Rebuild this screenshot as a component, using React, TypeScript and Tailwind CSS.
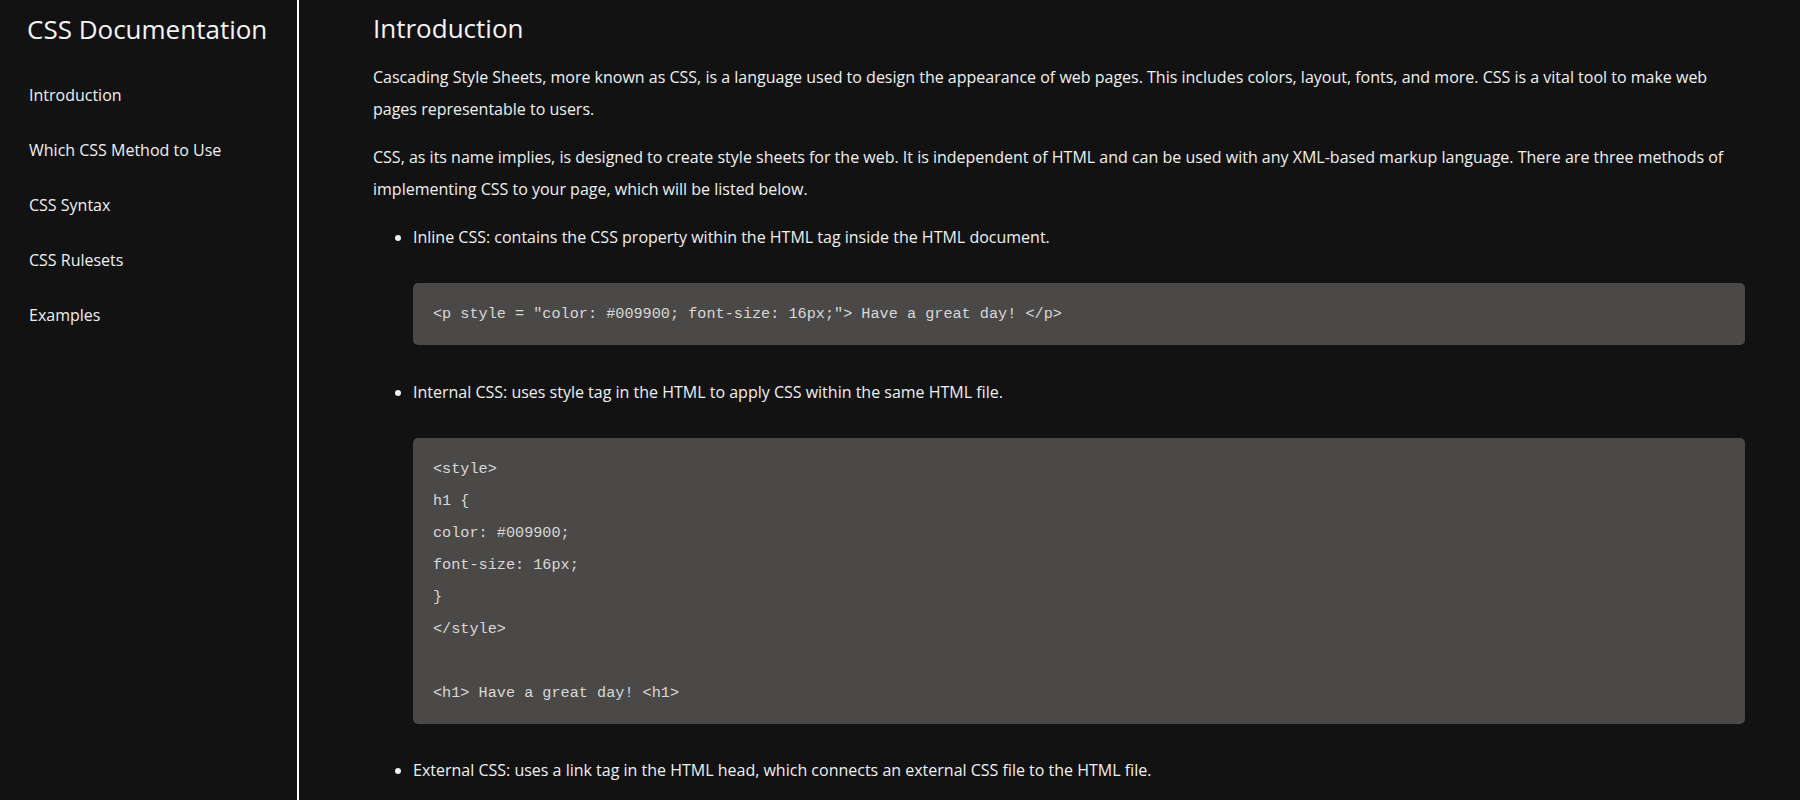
const NAV = ["Introduction", "Which CSS Method to Use", "CSS Syntax", "CSS Rulesets", "Examples"];

const INTERNAL_CODE = `<style>
h1 {
color: #009900;
font-size: 16px;
}
</style>

<h1> Have a great day! <h1>`;

function CodeBlock({ code }: { code: string }) {
  return (
    <pre className="mt-[30px] mb-[30.5px] whitespace-pre rounded-[5px] bg-[#4a4948] px-5 py-[15px] font-['Liberation_Mono',monospace] text-[15.2px] leading-8 text-[#d8d8d8]">
      {code}
    </pre>
  );
}

export default function App() {
  return (
    <div className="flex min-h-screen bg-[#121212] font-['Open_Sans',sans-serif] text-[#f0f0f0]">
      <nav className="h-screen w-[299px] shrink-0 border-r-2 border-white">
        <h1 className="pl-[27px] pt-[12px] text-[26px] leading-[35px] text-[#f4f4f4]">CSS Documentation</h1>
        <ul className="mt-[20px]">
          {NAV.map((item) => (
            <li key={item} className="flex h-[55px] items-center pl-[29px] text-base">
              <a href="#">{item}</a>
            </li>
          ))}
        </ul>
      </nav>

      <main className="min-w-0 flex-1 pl-[74px] pr-[55px] pt-[11px]">
        <h2 className="text-[26px] leading-[35px] text-[#f4f4f4]">Introduction</h2>
        <p className="mt-[15px] text-base leading-8">
          Cascading Style Sheets, more known as CSS, is a language used to design the appearance of web pages. This
          includes colors, layout, fonts, and more. CSS is a vital tool to make web pages representable to users.
        </p>
        <p className="mt-4 text-base leading-8">
          CSS, as its name implies, is designed to create style sheets for the web. It is independent of HTML and can be
          used with any XML-based markup language. There are three methods of implementing CSS to your page, which will
          be listed below.
        </p>
        <ul className="mt-4 list-disc pl-10 text-base leading-8">
          <li>
            Inline CSS: contains the CSS property within the HTML tag inside the HTML document.
            <CodeBlock code={`<p style = "color: #009900; font-size: 16px;"> Have a great day! </p>`} />
          </li>
          <li>
            Internal CSS: uses style tag in the HTML to apply CSS within the same HTML file.
            <CodeBlock code={INTERNAL_CODE} />
          </li>
          <li>External CSS: uses a link tag in the HTML head, which connects an external CSS file to the HTML file.</li>
        </ul>
      </main>
    </div>
  );
}
